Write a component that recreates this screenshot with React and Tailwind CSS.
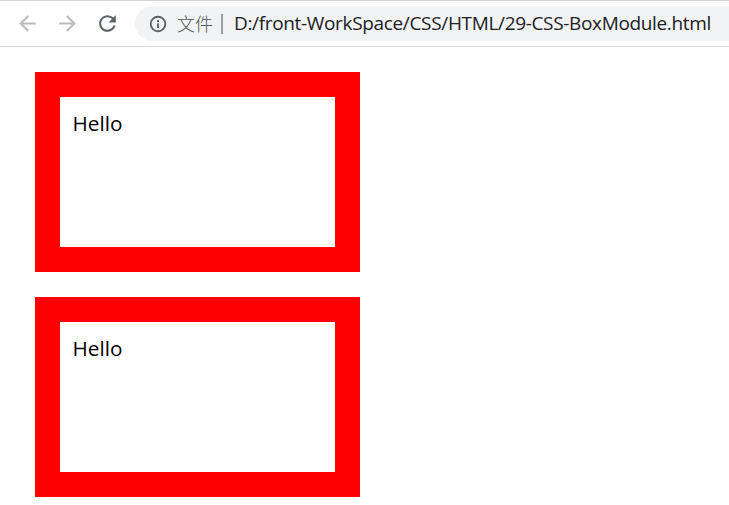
import React from "react";

function Icon({ d, className }) {
  return (
    <svg viewBox="0 0 24 24" fill="currentColor" className={className}>
      <path d={d} />
    </svg>
  );
}

function Toolbar() {
  return (
    <header className="flex h-[47px] items-center border-t border-b border-t-[#d3d5d8] border-b-[#d9dbdd] bg-white">
      <Icon
        className="ml-[15px] size-[25px] shrink-0 text-[#babcbe]"
        d="M20 11.1H7.83l5.59-5.69L12 4l-8 8 8 8 1.41-1.41L7.83 12.9H20v-1.8z"
      />
      <Icon
        className="ml-[15px] size-[25px] shrink-0 text-[#babcbe]"
        d="M12 4l-1.41 1.41L16.17 11.1H4v1.8h12.17l-5.58 5.69L12 20l8-8z"
      />
      <Icon
        className="ml-[15px] size-[25px] shrink-0 text-[#5f6368]"
        d="M17.65 6.35C16.2 4.9 14.21 4 12 4c-4.42 0-7.99 3.58-7.99 8s3.57 8 7.99 8c3.73 0 6.84-2.55 7.73-6h-2.08c-.82 2.33-3.04 4-5.65 4-3.31 0-6-2.69-6-6s2.69-6 6-6c1.66 0 3.14.69 4.22 1.78L13 11h7V4l-2.35 2.35z"
      />
      <div className="ml-[15px] flex h-[35px] min-w-0 flex-1 items-center overflow-hidden rounded-l-full bg-[#f1f3f4] whitespace-nowrap">
        <svg viewBox="0 0 20 20" className="ml-[12.5px] size-[20px] shrink-0 text-[#5f6368]">
          <circle cx="10" cy="10" r="7.3" fill="none" stroke="currentColor" strokeWidth="1.9" />
          <path fill="currentColor" d="M9.050 9.200h1.900v4.700h-1.900zM9.050 6.100h1.900v1.900h-1.900z" />
        </svg>
        <span className="ml-[9.5px] w-[36px] pb-[2px] font-['Noto_Sans_CJK_SC',sans-serif] text-[18px] leading-[24px] font-light text-[#54585d]">
          文件
        </span>
        <span className="ml-[8px] h-[20px] w-[2px] shrink-0 bg-[#9b9ea2]" />
        <span className="ml-[11px] pb-[2px] font-['Open_Sans',sans-serif] text-[19px] leading-[24px] tracking-[-0.34px] text-[#202124]">
          D:/front-WorkSpace/CSS/HTML/29-CSS-BoxModule.html
        </span>
      </div>
    </header>
  );
}

function Box() {
  return (
    <div className="h-[200px] w-[325px] border-[25px] border-[#ff0000] bg-white p-[12.5px] font-['Open_Sans',sans-serif] text-[20.75px] leading-[27px] text-black">
      Hello
    </div>
  );
}

export default function App() {
  return (
    <div className="h-[505px] w-[729px] overflow-hidden bg-white">
      <Toolbar />
      <main className="flex flex-col gap-[25px] pt-[25px] pl-[35px]">
        <Box />
        <Box />
      </main>
    </div>
  );
}
